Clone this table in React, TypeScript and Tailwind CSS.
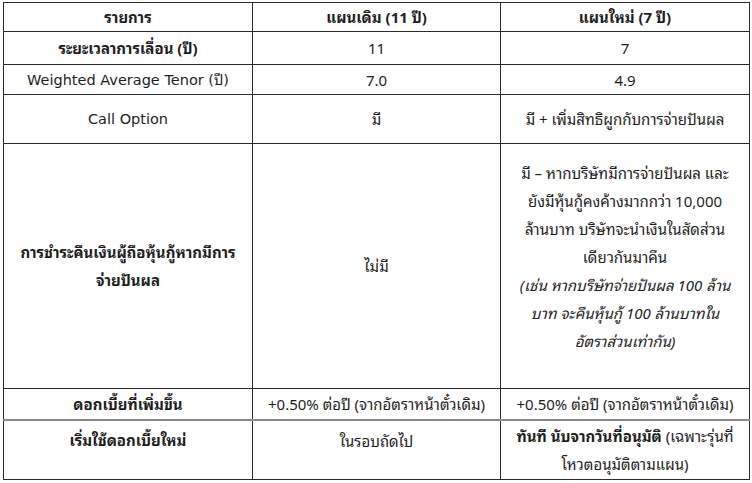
import React from "react";

const cell = "border border-[#2b2b2b] text-center align-middle px-2";
const latin = "font-['DejaVu_Sans','Noto_Sans_Thai_Looped',sans-serif] text-[14.5px]";

export default function App() {
  return (
    <div
      className="w-[752px] h-[483px] bg-white pt-[2px] pl-[3px] text-[#1e1e1e] text-[15px] leading-[28px]"
      style={{ fontFamily: "'Noto Sans', 'Noto Sans Thai Looped', 'Noto Sans Thai', 'DejaVu Sans', sans-serif" }}
    >
      <table className="table-fixed border-collapse w-[746px]">
        <colgroup>
          <col className="w-[249px]" />
          <col className="w-[248px]" />
          <col className="w-[249px]" />
        </colgroup>
        <tbody>
          <tr className="h-[29px] font-bold">
            <td className={cell}>รายการ</td>
            <td className={cell}>แผนเดิม (11 ปี)</td>
            <td className={cell}>แผนใหม่ (7 ปี)</td>
          </tr>
          <tr className="h-[33px]">
            <td className={`${cell} font-bold`}>ระยะเวลาการเลื่อน (ปี)</td>
            <td className={cell}>11</td>
            <td className={cell}>7</td>
          </tr>
          <tr className="h-[30px]">
            <td className={`${cell} ${latin}`}>Weighted Average Tenor (ปี)</td>
            <td className={cell}>7.0</td>
            <td className={cell}>4.9</td>
          </tr>
          <tr className="h-[49px]">
            <td className={`${cell} ${latin}`}>Call Option</td>
            <td className={cell}>มี</td>
            <td className={cell}>มี + เพิ่มสิทธิผูกกับการจ่ายปันผล</td>
          </tr>
          <tr className="h-[245px]">
            <td className={`${cell} font-bold`}>
              การชำระคืนเงินผู้ถือหุ้นกู้หากมีการ
              <br />
              จ่ายปันผล
            </td>
            <td className={cell}>ไม่มี</td>
            <td className={`${cell} pb-[18px]`}>
              <div>มี – หากบริษัทมีการจ่ายปันผล และ</div>
              <div>ยังมีหุ้นกู้คงค้างมากกว่า 10,000</div>
              <div>ล้านบาท บริษัทจะนำเงินในสัดส่วน</div>
              <div>เดียวกันมาคืน</div>
              <div className="italic">(เช่น หากบริษัทจ่ายปันผล 100 ล้าน</div>
              <div className="italic">บาท จะคืนหุ้นกู้ 100 ล้านบาทใน</div>
              <div className="italic">อัตราส่วนเท่ากัน)</div>
            </td>
          </tr>
          <tr className="h-[31px]">
            <td className={`${cell} font-bold border-b-2 border-b-[#8a8a8a]`}>ดอกเบี้ยที่เพิ่มขึ้น</td>
            <td className={`${cell} border-b-2 border-b-[#8a8a8a]`}>+0.50% ต่อปี (จากอัตราหน้าตั๋วเดิม)</td>
            <td className={`${cell} border-b-2 border-b-[#8a8a8a]`}>+0.50% ต่อปี (จากอัตราหน้าตั๋วเดิม)</td>
          </tr>
          <tr className="h-[60px]">
            <td className={`${cell} font-bold align-top pt-[5px]`}>เริ่มใช้ดอกเบี้ยใหม่</td>
            <td className={`${cell} align-top pt-[6px]`}>ในรอบถัดไป</td>
            <td className={cell}>
              <span className="font-bold">ทันที นับจากวันที่อนุมัติ</span> (เฉพาะรุ่นที่
              <br />
              โหวตอนุมัติตามแผน)
            </td>
          </tr>
        </tbody>
      </table>
    </div>
  );
}
